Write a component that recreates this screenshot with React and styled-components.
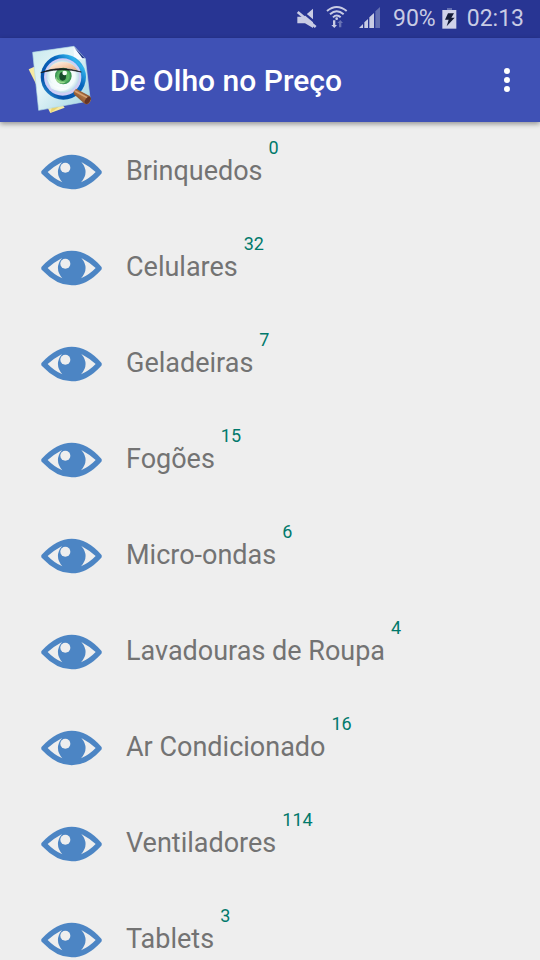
import React from "react";
import styled, { createGlobalStyle } from "styled-components";

const GlobalStyle = createGlobalStyle`
  *, *::before, *::after { box-sizing: border-box; }
  body {
    margin: 0;
    background: #eeeeee;
    font-family: Roboto, sans-serif;
  }
`;

const Screen = styled.div`
  display: flex;
  flex-direction: column;
  height: 100vh;
  overflow: hidden;
`;

const StatusBar = styled.div`
  flex: none;
  display: flex;
  align-items: center;
  justify-content: flex-end;
  height: 38px;
  padding-right: 16px;
  background: #283593;
  color: #c9cce4;
  font-size: 23px;
  line-height: 38px;

  svg { display: block; flex: none; }
`;

const StatusIcons = styled.div`
  display: flex;
  align-items: center;
  margin-right: 12px;
`;

const Battery = styled.div`
  display: flex;
  align-items: center;
  gap: 6px;
  margin-right: 10px;
`;

const AppBar = styled.header`
  flex: none;
  position: relative;
  z-index: 1;
  display: flex;
  align-items: center;
  height: 84px;
  padding: 0 16px 0 20px;
  background: #3f51b5;
  box-shadow: 0 2px 5px rgba(0, 0, 0, 0.38);
`;

const Title = styled.h1`
  flex: 1;
  margin: 0 0 0 10px;
  padding-top: 2px;
  color: #ffffff;
  font-size: 30px;
  font-weight: 500;
  line-height: 36px;
`;

const MenuButton = styled.button`
  display: flex;
  align-items: center;
  justify-content: center;
  width: 34px;
  height: 48px;
  padding: 0;
  border: 0;
  background: none;
  color: #ffffff;
  cursor: pointer;
`;

const CategoryList = styled.ul`
  flex: 1;
  min-height: 0;
  margin: 0;
  padding: 0;
  list-style: none;
  overflow-y: auto;
  scrollbar-width: none;
`;

const CategoryLink = styled.a`
  display: flex;
  align-items: center;
  height: 96px;
  padding: 0 40px;
  color: #737373;
  text-decoration: none;
`;

const CategoryName = styled.span`
  margin-left: 24px;
  padding-top: 2px;
  font-size: 27px;
  line-height: 32px;
`;

const CategoryCount = styled.span`
  align-self: flex-start;
  margin: 16px 0 0 6px;
  color: #00796b;
  font-size: 18px;
  line-height: 20px;
`;

const categories = [
  { name: "Brinquedos", count: 0 },
  { name: "Celulares", count: 32 },
  { name: "Geladeiras", count: 7 },
  { name: "Fogões", count: 15 },
  { name: "Micro-ondas", count: 6 },
  { name: "Lavadouras de Roupa", count: 4 },
  { name: "Ar Condicionado", count: 16 },
  { name: "Ventiladores", count: 114 },
  { name: "Tablets", count: 3 },
];

function SignalIcons() {
  return (
    <svg width="90" height="38" viewBox="0 0 270 114" fill="#c9cce4" aria-hidden="true">
      <path d="M19 50H38L66 26V84L42 70H19Z" />
      <path d="M30 32L80 74" stroke="#283593" strokeWidth="7" />
      <path d="M20 36L74 81" stroke="#c9cce4" strokeWidth="8" />
      <g fill="none" stroke="#c9cce4" strokeWidth="6">
        <path d="M108 33Q137 9 167 33" />
        <path d="M117 43Q137 25 158 43" />
        <path d="M126 52Q137 41 149 52" />
      </g>
      <circle cx="137" cy="56" r="4" />
      <path d="M126 61h7v14h5l-8 9-9-9h5Z" />
      <path d="M148 60l8 9h-5v13h-7V69h-5Z" fill="#6973b4" />
      <path d="M204 84L216 72V84ZM220 84V67L231 57V84ZM235 84V52L249 39V84Z" />
      <path d="M253 84V34L267 21V84Z" fill="#6470b2" />
    </svg>
  );
}

function BatteryIcon() {
  return (
    <svg width="15" height="22" viewBox="0 0 45 66" aria-hidden="true">
      <path d="M15 0h15v7H15Z" fill="#6470b2" />
      <path d="M1 6h42v56H1Z" fill="#d0d2e9" />
      <path d="M18 16h18l-8 13h10L14 55l6-20H9Z" fill="#141b38" />
    </svg>
  );
}

function AppLogo() {
  return (
    <svg width="80" height="84" viewBox="0 0 240 252" aria-hidden="true">
      <defs>
        <linearGradient id="paper" x1="0" y1="0" x2="1" y2="1">
          <stop offset="0" stopColor="#c8e9ed" />
          <stop offset=".4" stopColor="#e5f5f8" />
          <stop offset="1" stopColor="#9fd3e1" />
        </linearGradient>
        <linearGradient id="rim" x1="0" y1="1" x2="1" y2="0">
          <stop offset="0" stopColor="#45bff0" />
          <stop offset=".25" stopColor="#0652aa" />
          <stop offset=".62" stopColor="#0866bd" />
          <stop offset=".82" stopColor="#32b5ed" />
          <stop offset="1" stopColor="#07417f" />
        </linearGradient>
        <radialGradient id="lens">
          <stop offset="0" stopColor="#ffffff" />
          <stop offset=".75" stopColor="#f2fbfb" />
          <stop offset="1" stopColor="#bcdce8" />
        </radialGradient>
        <radialGradient id="iris">
          <stop offset="0" stopColor="#3c9c4b" />
          <stop offset=".65" stopColor="#5db865" />
          <stop offset="1" stopColor="#2c8a4b" />
        </radialGradient>
        <linearGradient id="lid" x1="0" y1="0" x2="1" y2="1">
          <stop offset="0" stopColor="#fffaf3" />
          <stop offset=".65" stopColor="#f4c39f" />
          <stop offset="1" stopColor="#d9a789" />
        </linearGradient>
        <linearGradient id="handle" x1="0" y1="1" x2="1" y2="0">
          <stop offset="0" stopColor="#542718" />
          <stop offset=".5" stopColor="#ab7040" />
          <stop offset="1" stopColor="#61301f" />
        </linearGradient>
      </defs>
      <path d="M26 94L43 86L134 209L91 225Z" fill="#f6e9a2" />
      <path d="M91 225L96 207L119 205Z" fill="#ead46f" />
      <path d="M38 43L162 25L196 62L211 188L56 217Z" fill="url(#paper)" stroke="#b4dbe5" strokeWidth="2" />
      <path d="M161 26L162 63L195 64Z" fill="#f7fcff" />
      <path d="M162 27L195 61L187 61Z" fill="#263b8d" />
      <circle cx="130" cy="117" r="68" fill="url(#rim)" />
      <circle cx="128" cy="117" r="56" fill="#cfcdf6" />
      <circle cx="128" cy="115" r="49" fill="url(#lens)" />
      <path d="M88 91Q107 65 140 73Q160 77 174 98Q130 82 88 98Z" fill="url(#lid)" />
      <ellipse cx="130" cy="114" rx="25" ry="25" fill="url(#iris)" />
      <ellipse cx="128" cy="115" rx="10" ry="13" fill="#174b2b" />
      <circle cx="134" cy="105" r="7" fill="#f7fff8" />
      <path d="M108 115Q112 134 138 131Q122 144 108 128Z" fill="#b7e8a0" opacity=".75" />
      <path d="M62 104Q119 80 184 102Q126 89 76 101Z" fill="#141716" stroke="#171b20" strokeWidth="2" />
      <path d="M82 121Q102 158 151 148Q124 170 93 151Z" fill="#ffffff" opacity=".65" />
      <path d="M162 160L168 152L209 174Q217 184 208 195Q201 203 192 196L161 168Z" fill="url(#handle)" />
      <path d="M166 160L202 179" stroke="#d5a070" strokeWidth="5" strokeLinecap="round" />
      <ellipse cx="203" cy="187" rx="7" ry="12" transform="rotate(35 203 187)" fill="#653424" />
    </svg>
  );
}

function EyeIcon() {
  return (
    <svg width="62" height="40" viewBox="0 0 186 120" aria-hidden="true">
      <path
        d="M5 62Q2 66 5 71Q50 118 95 118Q142 118 184 71Q187 66 184 62Q142 14 95 14Q50 14 5 62Z"
        fill="#4c85c4"
      />
      <path d="M66 36Q42 49 23 66Q42 86 67 97Q41 67 66 36Z" fill="#eeeeee" />
      <path d="M124 36Q148 49 167 66Q148 86 123 97Q150 67 124 36Z" fill="#eeeeee" />
      <circle cx="76" cy="53" r="15" fill="#eeeeee" />
    </svg>
  );
}

function OverflowIcon() {
  return (
    <svg width="8" height="26" viewBox="0 0 8 26" fill="currentColor" aria-hidden="true">
      <circle cx="4" cy="4" r="3" />
      <circle cx="4" cy="13" r="3" />
      <circle cx="4" cy="22" r="3" />
    </svg>
  );
}

export default function App() {
  return (
    <Screen>
      <GlobalStyle />
      <StatusBar>
        <StatusIcons>
          <SignalIcons />
        </StatusIcons>
        <Battery>
          <span>90%</span>
          <BatteryIcon />
        </Battery>
        <time>02:13</time>
      </StatusBar>
      <AppBar>
        <AppLogo />
        <Title>De Olho no Preço</Title>
        <MenuButton type="button" aria-label="Mais opções">
          <OverflowIcon />
        </MenuButton>
      </AppBar>
      <CategoryList>
        {categories.map(({ name, count }) => (
          <li key={name}>
            <CategoryLink href="#">
              <EyeIcon />
              <CategoryName>{name}</CategoryName>
              <CategoryCount>{count}</CategoryCount>
            </CategoryLink>
          </li>
        ))}
      </CategoryList>
    </Screen>
  );
}
